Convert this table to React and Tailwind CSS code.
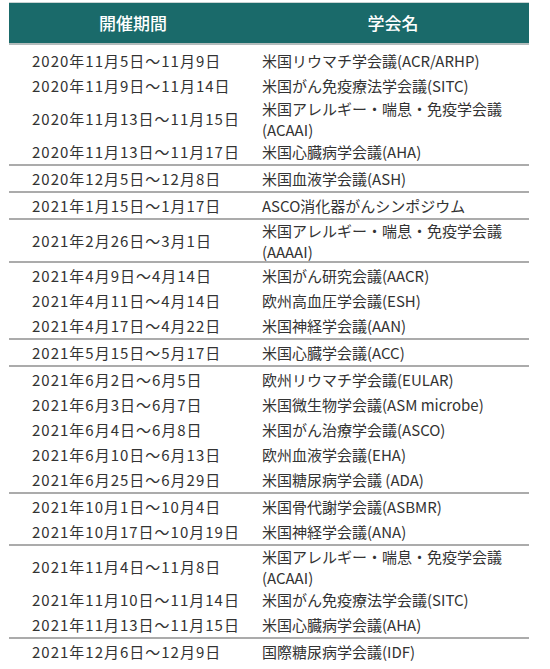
import React from "react";

const rows = [
  ["2020年11月5日〜11月9日", ["米国リウマチ学会議(ACR/ARHP)"]],
  ["2020年11月9日〜11月14日", ["米国がん免疫療法学会議(SITC)"]],
  ["2020年11月13日〜11月15日", ["米国アレルギー・喘息・免疫学会議", "(ACAAI)"]],
  ["2020年11月13日〜11月17日", ["米国心臓病学会議(AHA)"], true],
  ["2020年12月5日〜12月8日", ["米国血液学会議(ASH)"], true],
  ["2021年1月15日〜1月17日", ["ASCO消化器がんシンポジウム"], true],
  ["2021年2月26日〜3月1日", ["米国アレルギー・喘息・免疫学会議", "(AAAAI)"], true],
  ["2021年4月9日〜4月14日", ["米国がん研究会議(AACR)"]],
  ["2021年4月11日〜4月14日", ["欧州高血圧学会議(ESH)"]],
  ["2021年4月17日〜4月22日", ["米国神経学会議(AAN)"], true],
  ["2021年5月15日〜5月17日", ["米国心臓学会議(ACC)"], true],
  ["2021年6月2日〜6月5日", ["欧州リウマチ学会議(EULAR)"]],
  ["2021年6月3日〜6月7日", ["米国微生物学会議(ASM microbe)"]],
  ["2021年6月4日〜6月8日", ["米国がん治療学会議(ASCO)"]],
  ["2021年6月10日〜6月13日", ["欧州血液学会議(EHA)"]],
  ["2021年6月25日〜6月29日", ["米国糖尿病学会議 (ADA)"], true],
  ["2021年10月1日〜10月4日", ["米国骨代謝学会議(ASBMR)"]],
  ["2021年10月17日〜10月19日", ["米国神経学会議(ANA)"], true],
  ["2021年11月4日〜11月8日", ["米国アレルギー・喘息・免疫学会議", "(ACAAI)"]],
  ["2021年11月10日〜11月14日", ["米国がん免疫療法学会議(SITC)"]],
  ["2021年11月13日〜11月15日", ["米国心臓病学会議(AHA)"], true],
  ["2021年12月6日〜12月9日", ["国際糖尿病学会議(IDF)"]],
];

function rowClass(double, border) {
  if (double && border) return "h-[43px] border-b-2 border-[#ababab]";
  if (double) return "h-[41px]";
  if (border) return "h-[27px] border-b-2 border-[#ababab]";
  return "h-[25px]";
}

export default function App() {
  return (
    <div
      className="w-[550px] h-[669px] overflow-hidden bg-white pt-[2px]"
      style={{ fontFamily: '"Noto Sans CJK JP", "Noto Sans", sans-serif' }}
    >
      <div className="ml-[9px] w-[520px]">
        <div className="border-t border-[#c9d3d3] border-b-2 border-b-[#b3bcbc] bg-[#1a6a6a] h-[43px] flex text-white text-[17px] font-medium">
          <div className="w-[248px] flex items-center justify-center">開催期間</div>
          <div className="flex-1 flex items-center justify-center">学会名</div>
        </div>
        <div className="pt-[3px] text-[#333333] text-[15px]">
          {rows.map(([date, names, border], i) => (
            <div key={i} className={"flex items-center " + rowClass(names.length > 1, border)}>
              <div className="w-[248px] pl-[23px] tracking-[1px] leading-[21px]">{date}</div>
              <div className="flex-1 pl-[5px] leading-[21px]">
                {names.map((n, j) => (
                  <div key={j}>{n}</div>
                ))}
              </div>
            </div>
          ))}
        </div>
      </div>
    </div>
  );
}
